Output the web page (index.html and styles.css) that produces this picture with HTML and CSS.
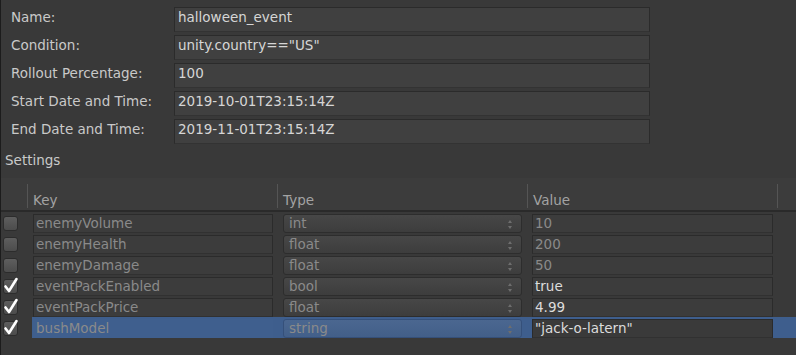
FILE: index.html
```html
<!DOCTYPE html>
<html>
<head>
<meta charset="utf-8">
<link rel="stylesheet" href="styles.css">
</head>
<body>
<div class="panel">
  <div class="form">
    <div class="frow"><span class="flabel">Name:</span><div class="finput">halloween_event</div></div>
    <div class="frow"><span class="flabel">Condition:</span><div class="finput">unity.country=="US"</div></div>
    <div class="frow"><span class="flabel">Rollout Percentage:</span><div class="finput">100</div></div>
    <div class="frow"><span class="flabel">Start Date and Time:</span><div class="finput">2019-10-01T23:15:14Z</div></div>
    <div class="frow"><span class="flabel">End Date and Time:</span><div class="finput">2019-11-01T23:15:14Z</div></div>
  </div>
  <div class="section-title">Settings</div>
  <div class="table">
    <div class="thead">
      <div class="th th-check"></div>
      <div class="th"><span class="sep"></span>Key</div>
      <div class="th"><span class="sep"></span>Type</div>
      <div class="th"><span class="sep"></span>Value</div>
      <div class="th"><span class="sep"></span></div>
    </div>

    <div class="trow">
      <div class="cell c-check"><span class="cbox"></span></div>
      <div class="cell c-key"><div class="tinput">enemyVolume</div></div>
      <div class="cell c-type"><div class="tselect">int<span class="arrows"></span></div></div>
      <div class="cell c-val"><div class="tinput">10</div></div>
      <div class="cell c-end"></div>
    </div>
    <div class="trow">
      <div class="cell c-check"><span class="cbox"></span></div>
      <div class="cell c-key"><div class="tinput">enemyHealth</div></div>
      <div class="cell c-type"><div class="tselect">float<span class="arrows"></span></div></div>
      <div class="cell c-val"><div class="tinput">200</div></div>
      <div class="cell c-end"></div>
    </div>
    <div class="trow">
      <div class="cell c-check"><span class="cbox"></span></div>
      <div class="cell c-key"><div class="tinput">enemyDamage</div></div>
      <div class="cell c-type"><div class="tselect">float<span class="arrows"></span></div></div>
      <div class="cell c-val"><div class="tinput">50</div></div>
      <div class="cell c-end"></div>
    </div>
    <div class="trow on">
      <div class="cell c-check"><span class="cbox checked"><svg class="tick" width="20" height="20" viewBox="0 0 20 20"><path d="M4.5 10.5 L8 15 L15.5 3" fill="none" stroke="#ffffff" stroke-width="2.6" stroke-linecap="round" stroke-linejoin="round"/></svg></span></div>
      <div class="cell c-key"><div class="tinput">eventPackEnabled</div></div>
      <div class="cell c-type"><div class="tselect">bool<span class="arrows"></span></div></div>
      <div class="cell c-val"><div class="tinput">true</div></div>
      <div class="cell c-end"></div>
    </div>
    <div class="trow on">
      <div class="cell c-check"><span class="cbox checked"><svg class="tick" width="20" height="20" viewBox="0 0 20 20"><path d="M4.5 10.5 L8 15 L15.5 3" fill="none" stroke="#ffffff" stroke-width="2.6" stroke-linecap="round" stroke-linejoin="round"/></svg></span></div>
      <div class="cell c-key"><div class="tinput">eventPackPrice</div></div>
      <div class="cell c-type"><div class="tselect">float<span class="arrows"></span></div></div>
      <div class="cell c-val"><div class="tinput">4.99</div></div>
      <div class="cell c-end"></div>
    </div>
    <div class="trow on selected">
      <div class="cell c-check"><span class="cbox checked"><svg class="tick" width="20" height="20" viewBox="0 0 20 20"><path d="M4.5 10.5 L8 15 L15.5 3" fill="none" stroke="#ffffff" stroke-width="2.6" stroke-linecap="round" stroke-linejoin="round"/></svg></span></div>
      <div class="cell c-key"><div class="tinput">bushModel</div></div>
      <div class="cell c-type"><div class="tselect">string<span class="arrows"></span></div></div>
      <div class="cell c-val"><div class="tinput">"jack-o-latern"</div></div>
      <div class="cell c-end"></div>
    </div>
  </div>
</div>
</body>
</html>
```

FILE: styles.css
```css
html, body {
  margin: 0;
  padding: 0;
  background: #393939;
}
body {
  font-family: "DejaVu Sans", sans-serif;
  font-size: 13.5px;
  color: #c8c8c8;
}
.panel {
  width: 796px;
  height: 355px;
  box-sizing: border-box;
  border-left: 1px solid #1c1c1c;
  overflow: hidden;
  padding-top: 7px;
  background: #393939;
}
.form {
  display: flex;
  flex-direction: column;
  gap: 3px;
}
.frow {
  display: flex;
  align-items: flex-start;
  height: 25px;
}
.flabel {
  width: 163px;
  padding-left: 10px;
  padding-top: 1px;
  line-height: 19px;
  color: #c9c9c9;
}
.finput {
  width: 476px;
  height: 25px;
  box-sizing: border-box;
  background: #404040;
  border: 1px solid #2b2b2b;
  border-bottom-color: #333333;
  padding-left: 3px;
  line-height: 19px;
  color: #d6d6d6;
}
.section-title {
  margin-top: 7px;
  padding-left: 4px;
  line-height: 19px;
  color: #c9c9c9;
}
.table {
  margin-top: 8px;
}
.thead {
  display: grid;
  grid-template-columns: 26px 250px 250px 250px 1fr;
  height: 32px;
  background: #3c3c3c;
  border-bottom: 2px solid #2a2a2a;
}
.th {
  position: relative;
  padding-left: 6px;
  padding-top: 13px;
  line-height: 19px;
  color: #a3a3a3;
}
.sep {
  position: absolute;
  left: 0;
  top: 6px;
  width: 1px;
  height: 24px;
  background: #555555;
}
.trow {
  display: grid;
  grid-template-columns: 26px 250px 250px 250px 1fr;
  height: 21px;
}
.cell {
  padding-top: 2px;
  box-sizing: border-box;
  height: 21px;
}
.c-check {
  padding-left: 2px;
  padding-top: 4px;
}
.cbox {
  position: relative;
  display: block;
  width: 15px;
  height: 15px;
  box-sizing: border-box;
  border-radius: 3px;
  border: 1px solid #2c2c2c;
  background: linear-gradient(#5e5e5e, #4c4c4c);
}
.tick {
  position: absolute;
  left: -3px;
  top: -4px;
}
.c-key {
  padding-left: 6px;
  padding-right: 4px;
}
.c-type {
  padding-left: 6px;
  padding-right: 5px;
}
.c-val {
  padding-left: 5px;
  padding-right: 4px;
}
.tinput {
  height: 19px;
  box-sizing: border-box;
  background: #3c3c3c;
  border: 1px solid #2b2b2b;
  border-bottom-color: #313131;
  padding-left: 2px;
  line-height: 17px;
  color: #8a8a8a;
  white-space: nowrap;
  overflow: hidden;
}
.tselect {
  position: relative;
  height: 19px;
  box-sizing: border-box;
  border-radius: 3px;
  background: linear-gradient(#474747, #3d3d3d);
  border: 1px solid #2d2d2d;
  padding-left: 5px;
  line-height: 17px;
  color: #8a8a8a;
}
.arrows {
  position: absolute;
  right: 8px;
  top: 5px;
  width: 5px;
  height: 9px;
}
.arrows::before, .arrows::after {
  content: "";
  position: absolute;
  left: 0;
  border-left: 2.5px solid transparent;
  border-right: 2.5px solid transparent;
}
.arrows::before {
  top: 0;
  border-bottom: 3px solid #6e6e6e;
}
.arrows::after {
  bottom: 0;
  border-top: 3px solid #6e6e6e;
}
.trow.on .c-val .tinput {
  color: #dcdcdc;
}
.trow.selected .c-key,
.trow.selected .c-type,
.trow.selected .c-val,
.trow.selected .c-end {
  background: #3e5e8d;
}
.trow.selected .c-key {
  background: linear-gradient(90deg, #393939 5px, #3e5e8d 5px);
}
.trow.selected .c-key .tinput {
  background: #3f5f8e;
  border-color: #3f5f8e;
}
.trow.selected .tselect {
  background: linear-gradient(#4b6790, #425f89);
  border-color: #35507a;
}
.trow.selected .c-val .tinput {
  background: #3a3a3a;
}
```
